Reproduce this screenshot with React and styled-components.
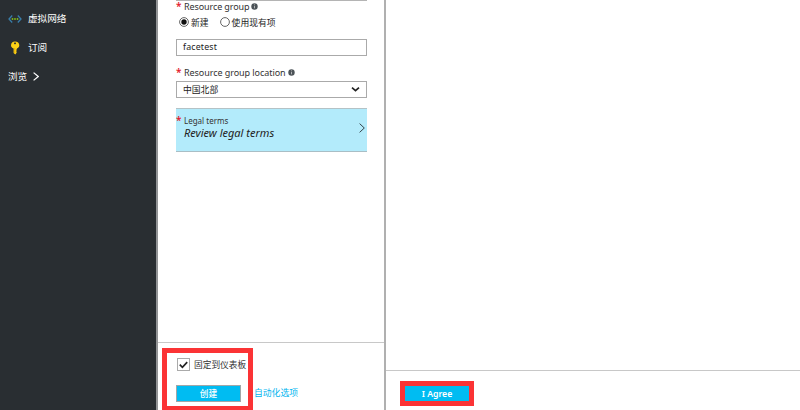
import React from 'react';
import styled, { createGlobalStyle } from 'styled-components';

const Global = createGlobalStyle`
  * { box-sizing: border-box; }
  body { margin: 0; overflow: hidden; background: #fff; }
  svg { display: block; flex: none; }
`;

const Page = styled.div`
  display: grid;
  grid-template-columns: 158px 228px 1fr;
  width: 800px;
  height: 410px;
  overflow: hidden;
  font-family: 'Noto Sans', 'Noto Sans CJK SC', sans-serif;
  font-size: 9px;
  color: #333;
  white-space: nowrap;
`;

const Sidebar = styled.nav`
  background: #292e32;
  border-right: 2px solid #929496;
  padding: 4px 0 0 8px;
`;

const NavItem = styled.div`
  display: flex;
  align-items: center;
  height: 29px;
  gap: 6px;
  color: #fff;
  font-size: 9.6px;
  line-height: 12px;
`;

const Blade = styled.section`
  display: flex;
  flex-direction: column;
  height: 410px;
  min-width: 0;
  background: #fff;
  border-right: ${(p) => (p.$divided ? '2px solid #b0b0b0' : '0')};
`;

const Form = styled.div`
  flex: 1;
  padding: 0 17px 0 18px;
`;

const TopRule = styled.div`
  height: 1px;
  background: #b4b4b4;
`;

const Label = styled.div`
  display: flex;
  align-items: center;
  height: 11px;
  margin-top: ${(p) => p.$top || 0}px;
  font-size: ${(p) => p.$size || 9}px;
  line-height: 11px;
  letter-spacing: ${(p) => p.$spacing || 0}px;
`;

const Star = styled.span`
  width: 8px;
  flex: none;
  color: #e3182d;
  font-weight: 600;
  font-size: 10px;
  line-height: 11px;
  letter-spacing: 0;
`;

const Radios = styled.div`
  display: flex;
  align-items: center;
  height: 12px;
  margin-top: 4px;
  padding-left: 3px;
`;

const Option = styled.label`
  display: flex;
  align-items: center;
  gap: 2px;
  margin-right: 11px;
  font-size: 8.8px;
  line-height: 12px;
  color: #222;
`;

const OptionText = styled.span`
  padding-top: 2px;
`;

const Field = styled.div`
  display: flex;
  align-items: center;
  justify-content: space-between;
  height: 17px;
  margin-top: ${(p) => p.$top}px;
  padding: 0 6px;
  border: 1px solid #aaa;
  color: #222;
  font-size: 8.8px;
  line-height: ${(p) => p.$line || 15}px;
  letter-spacing: ${(p) => p.$spacing || 0}px;
`;

const FieldText = styled.span`
  padding-top: 2px;
`;

const Legal = styled.div`
  display: flex;
  align-items: flex-start;
  justify-content: space-between;
  height: 44px;
  margin-top: 10px;
  padding: 6px 2px 0 0;
  background: #b3ebfb;
  border-top: 1px solid #b4c2c6;
  border-bottom: 1px solid #a9bec5;
`;

const LegalValue = styled.div`
  padding-left: 8px;
  font-size: 11px;
  line-height: 14px;
  font-style: italic;
  color: #222;
`;

const LegalArrow = styled.span`
  margin-top: 8px;
`;

const Footer = styled.footer`
  display: flex;
  height: ${(p) => p.$height}px;
  border-top: 1px solid #c8c8c8;
  padding: ${(p) => p.$padding};
`;

const Highlight = styled.div`
  flex: none;
  width: ${(p) => p.$width}px;
  height: ${(p) => p.$height}px;
  padding: ${(p) => p.$padding || 0};
  border: 5px solid #fb3335;
`;

const CheckRow = styled.label`
  display: flex;
  align-items: center;
  height: 13px;
  gap: 4px;
  padding-left: 1px;
  font-size: 8.7px;
  line-height: 13px;
`;

const CheckBox = styled.span`
  display: flex;
  flex: none;
  align-items: center;
  justify-content: center;
  width: 13px;
  height: 13px;
  border: 1px solid #aaa;
`;

const Button = styled.button`
  display: block;
  width: ${(p) => p.$width}px;
  height: ${(p) => p.$height}px;
  margin: ${(p) => p.$top || 0}px 0 0;
  padding: 1px 0 0;
  border: ${(p) => (p.$outlined ? '1px solid #a0a6a8' : '0')};
  background: #00bcf2;
  color: #fff;
  font: ${(p) => (p.$outlined ? 500 : 600)} 8.7px/1 'Noto Sans', 'Noto Sans CJK SC', sans-serif;
`;

const Link = styled.a`
  align-self: flex-start;
  margin: 39px 0 0 1px;
  line-height: 13px;
  font-size: 8.8px;
  color: #00b5ef;
`;

const NetworkIcon = () => (
  <svg width="14" height="10" viewBox="0 0 14 10" fill="none">
    <path d="M4.200 1.500L1 5l3.200 3.500M9.800 1.500L13 5 9.800 8.500" stroke="#397eaa" strokeWidth="1.300" />
    <circle cx="4.500" cy="5" r=".9" fill="#84bd16" />
    <circle cx="7" cy="5" r=".9" fill="#84bd16" />
    <circle cx="9.500" cy="5" r=".9" fill="#84bd16" />
  </svg>
);

const KeyIcon = () => (
  <svg width="14" height="14" viewBox="0 0 14 14">
    <path fill="#fcd116" fillRule="evenodd" d="M7 .6c2.600 0 4.300 1.500 4.300 3.600 0 1.700-1 2.800-2.400 3.300v.8l-.8.8.8.8-.8.9.7.8L7.300 13.400 5.600 12V7.500C4.100 7 3 5.900 3 4.200 3 2.100 4.600.6 7 .6zM7 1.500a1 .8 0 1 0 .01 0z" />
    <path d="M6.700 7v5" stroke="#e0a500" strokeWidth=".7" />
  </svg>
);

const Chevron = ({ width, height, color, weight }) => (
  <svg width={width} height={height} viewBox="0 0 6 10" preserveAspectRatio="none" fill="none">
    <path d="M.6.6L5.300 5 .6 9.400" stroke={color} strokeWidth={weight} />
  </svg>
);

const InfoIcon = () => (
  <svg width="7" height="7" viewBox="0 0 7 7">
    <circle cx="3.500" cy="3.500" r="3.200" fill="#4c5358" />
    <path d="M3.500 3v2.300M3.500 1.400v.9" stroke="#ccc" strokeWidth=".8" />
  </svg>
);

const InfoSlot = styled.span`
  margin-left: 2px;
`;

const RadioIcon = ({ checked }) => (
  <svg width="10" height="10" viewBox="0 0 10 10">
    <circle cx="5" cy="5" r="4.400" fill="#fff" stroke="#555" strokeWidth=".9" />
    {checked && <circle cx="5" cy="5" r="2.700" fill="#111" />}
  </svg>
);

export default function App() {
  return (
    <>
      <Global />
      <Page>
        <Sidebar>
          <NavItem><NetworkIcon />虚拟网络</NavItem>
          <NavItem><KeyIcon />订阅</NavItem>
          <NavItem>浏览<Chevron width={6} height={9} color="#fff" weight={1.2} /></NavItem>
        </Sidebar>
        <Blade $divided>
          <Form>
            <TopRule />
            <Label $spacing={-0.1}><Star>*</Star>Resource group<InfoSlot><InfoIcon /></InfoSlot></Label>
            <Radios>
              <Option><RadioIcon checked /><OptionText>新建</OptionText></Option>
              <Option><RadioIcon /><OptionText>使用现有项</OptionText></Option>
            </Radios>
            <Field $top={11} $spacing={0.18}>facetest</Field>
            <Label $top={11} $spacing={-0.06}><Star>*</Star>Resource group location<InfoSlot><InfoIcon /></InfoSlot></Label>
            <Field $top={3} $line={13}>
              <FieldText>中国北部</FieldText>
              <svg width="9" height="7" viewBox="0 0 9 7" fill="none">
                <path d="M1 1.700l3.500 3 3.500-3" stroke="#222" strokeWidth="1.700" />
              </svg>
            </Field>
            <Legal>
              <div>
                <Label $size={8} $spacing={0}><Star>*</Star>Legal terms</Label>
                <LegalValue>Review legal terms</LegalValue>
              </div>
              <LegalArrow><Chevron width={6} height={10} color="#36454b" weight={1} /></LegalArrow>
            </Legal>
          </Form>
          <Footer $height={68} $padding="5px 0 0 4px">
            <Highlight $width={91} $height={63} $padding="5px 0 0 9px">
              <CheckRow>
                <CheckBox>
                  <svg width="9" height="8" viewBox="0 0 9 8" fill="none">
                    <path d="M.8 3.700l2.600 2.600L8.200 1.200" stroke="#222" strokeWidth="1.700" />
                  </svg>
                </CheckBox>
                <OptionText>固定到仪表板</OptionText>
              </CheckRow>
              <Button $width={65} $height={17} $top={14} $outlined>创建</Button>
            </Highlight>
            <Link>自动化选项</Link>
          </Footer>
        </Blade>
        <Blade>
          <Form />
          <Footer $height={40} $padding="10px 0 0 14px">
            <Highlight $width={74} $height={25}>
              <Button $width={64} $height={15}>I Agree</Button>
            </Highlight>
          </Footer>
        </Blade>
      </Page>
    </>
  );
}
